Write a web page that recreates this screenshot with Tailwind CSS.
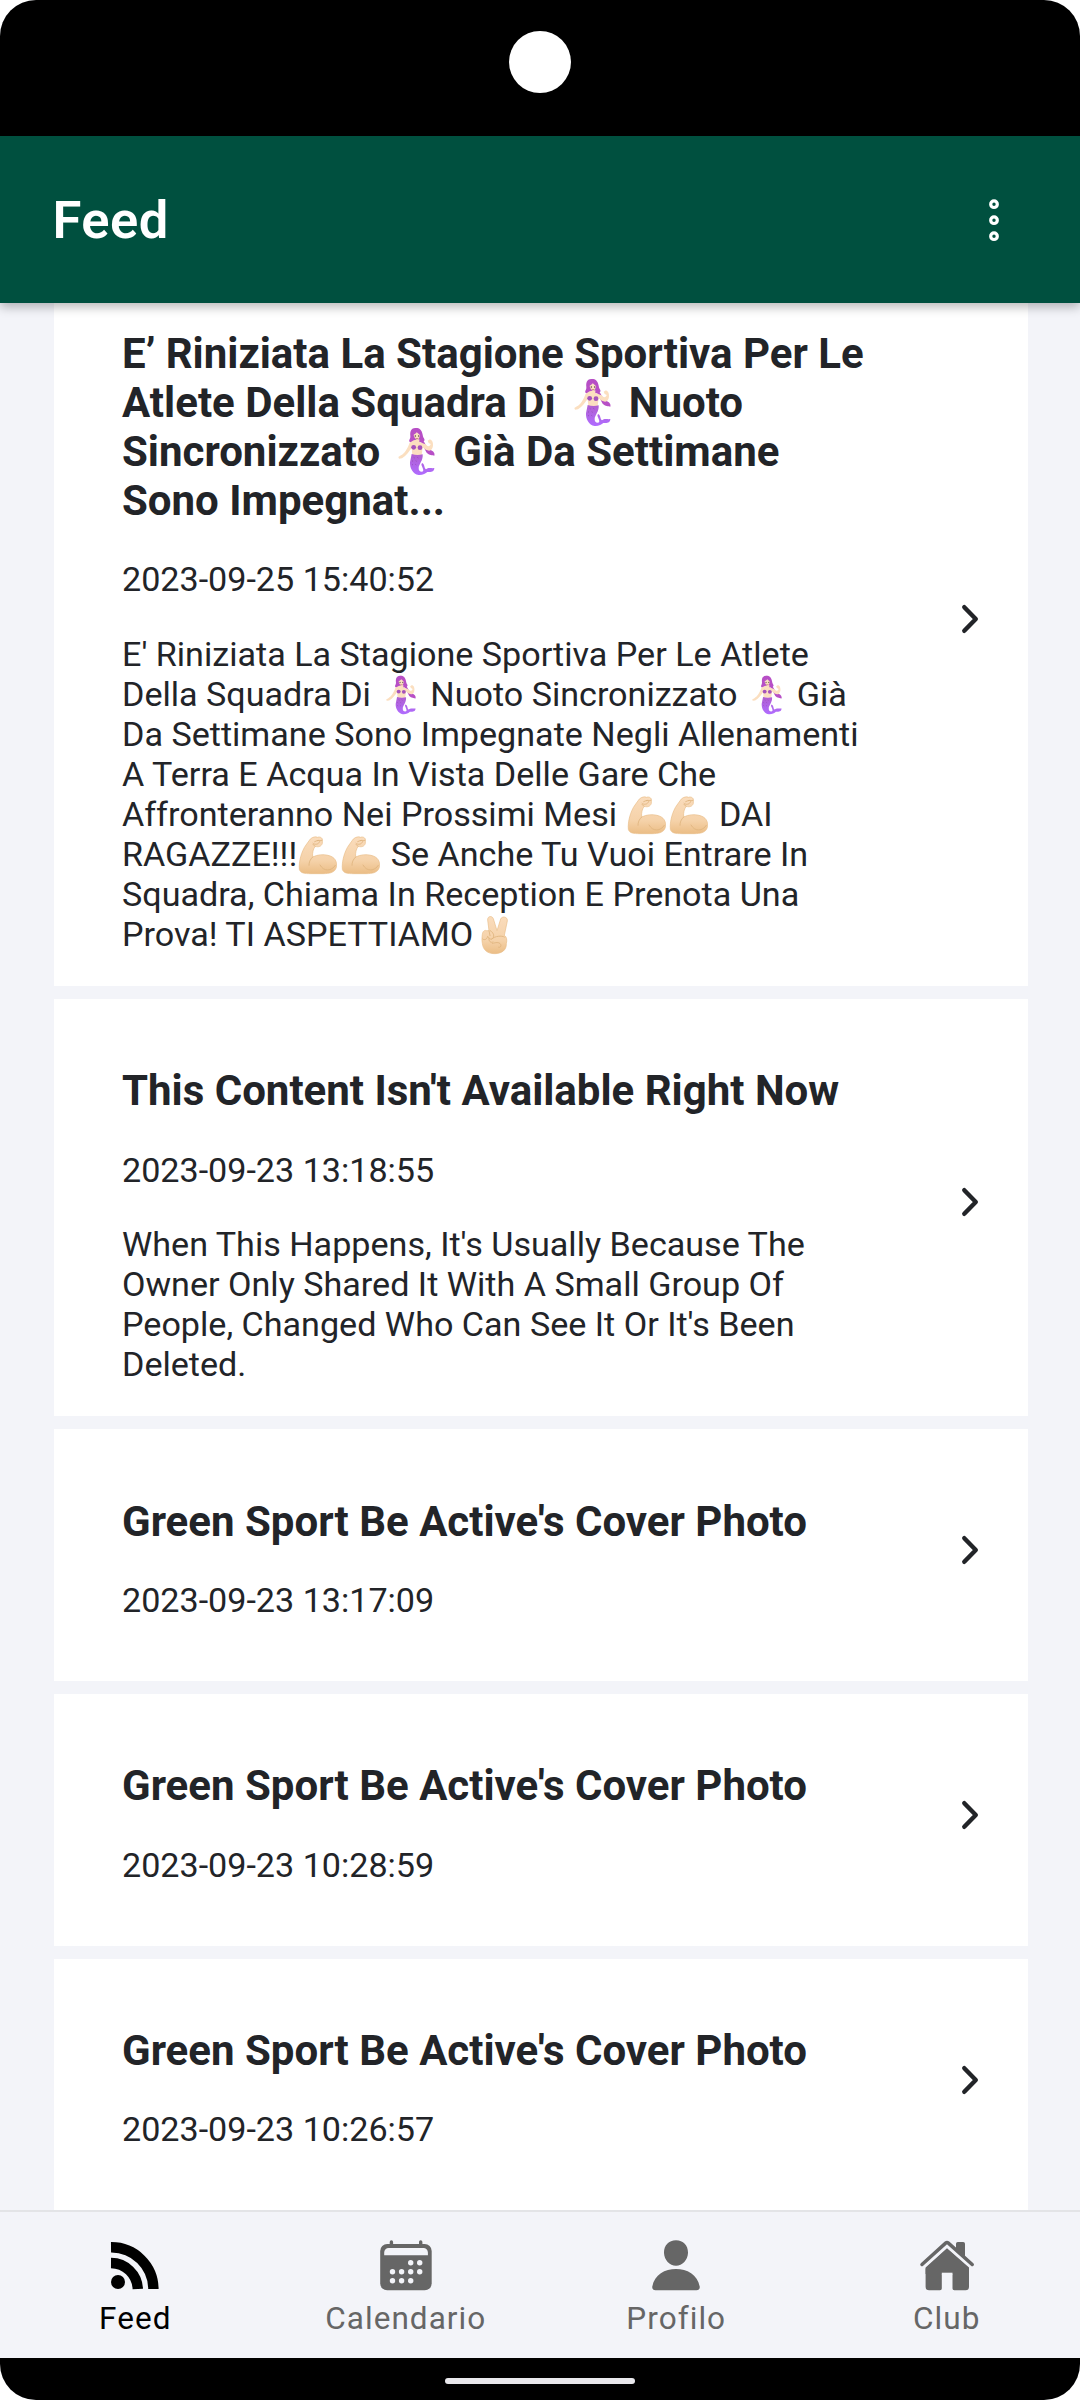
<!DOCTYPE html>
<html lang="it">
<head>
<meta charset="utf-8">
<title>Feed</title>
<script src="https://cdn.jsdelivr.net/npm/@tailwindcss/browser@4"></script>
</head>
<body class="bg-white">
<svg class="absolute size-0" aria-hidden="true">
  <defs>
    <linearGradient id="tail" x1="0" y1="0" x2="0" y2="1"><stop offset="0" stop-color="#b05fd0"/><stop offset="1" stop-color="#b06cff"/></linearGradient>
    <linearGradient id="skin" x1="0" y1="0" x2="0" y2="1"><stop offset="0" stop-color="#fadcbc"/><stop offset=".65" stop-color="#f5d2a9"/><stop offset="1" stop-color="#ebbd85"/></linearGradient>
    <symbol id="mermaid" viewBox="22 24 147 147">
      <path d="M92 27C77 28 76 40 77 51C78 61 69 65 77 70L94 73L109 70C117 77 118 90 126 101C133 109 144 108 149 110C152 100 141 93 136 93C129 90 122 75 117 67C124 61 115 59 114 47C111 31 103 26 92 27Z" fill="#b74fc6"/>
      <path d="M87 64L75 71C69 87 61 103 49 109L41 114L43 119L52 118C65 110 75 95 81 87L83 108H111L114 85C122 93 133 98 139 93C147 86 146 72 142 65L136 61L129 65L132 72L138 75C136 83 129 84 123 76L104 69V61Z" fill="#fbdfc0"/>
      <path d="M86 43Q95 36 105 43Q108 55 98 64Q88 59 86 43Z" fill="#fae0c2"/>
      <path d="M85 46Q94 42 96 33Q101 42 108 47" fill="none" stroke="#b74fc6" stroke-width="5"/>
      <circle cx="92" cy="51" r="2.2" fill="#574740"/><circle cx="102" cy="51" r="2.2" fill="#574740"/><path d="M93 58Q97 61 101 58" fill="none" stroke="#a25c51" stroke-width="2"/>
      <circle cx="87" cy="85" r="7.2" fill="#a552bb"/><circle cx="106" cy="86" r="7.2" fill="#a552bb"/>
      <path d="M81 105Q97 110 114 106C116 125 102 136 102 147C102 155 105 158 111 158C121 158 113 145 110 137L112 132C121 135 118 148 124 151C132 143 140 149 149 147C149 160 135 159 128 159C123 164 113 169 102 168C84 166 75 146 76 130Z" fill="url(#tail)"/>
      <path d="M87 115l3 2m8-2l3 2m-19 8l3 2m8-2l3 2m-14 9l3 2m7-2l3 2" fill="none" stroke="#8c47aa" stroke-width="2"/>
    </symbol>
    <symbol id="arm" viewBox="1011 42 120 120">
      <path d="M1048 54C1055 48 1064 46 1069 49C1077 46 1085 51 1084 57V67C1081 77 1072 79 1063 76C1056 85 1054 94 1055 108C1069 101 1087 99 1101 103C1122 108 1129 121 1126 139C1122 155 1105 158 1086 158H1049C1032 158 1018 157 1015 145C1013 123 1021 91 1035 72Z" fill="url(#skin)" stroke="#e8bd88" stroke-width="2"/>
      <path d="M1055 108C1047 116 1044 123 1044 133M1077 132C1088 153 1112 151 1123 133M1062 76L1056 70M1056 67C1061 72 1071 70 1074 65C1079 61 1075 56 1069 59M1083 58C1078 60 1073 57 1068 59L1061 62" fill="none" stroke="#dfb37d" stroke-width="2.5" stroke-linecap="round"/>
    </symbol>
    <symbol id="peace" viewBox="555 402 120 120">
      <path d="M597 449L593 417C592 405 606 403 610 413L621 449L632 414C636 404 654 407 652 420L643 463C650 467 652 477 649 488C650 507 635 518 614 518C591 518 579 506 577 487C575 478 576 468 577 460C578 451 584 446 590 449Z" fill="url(#skin)" stroke="#e8bd88" stroke-width="2"/>
      <path d="M597 449L600 464M578 474C584 480 592 473 593 466C600 478 607 476 611 468C613 459 606 452 601 449M605 474C615 465 635 463 643 468M607 487C617 485 627 482 632 490C635 497 630 500 626 499M597 471C595 481 603 487 609 483" fill="none" stroke="#dfb37d" stroke-width="2.5" stroke-linecap="round"/>
    </symbol>
  </defs>
</svg>

<div class="flex h-[2400px] w-[1080px] flex-col overflow-hidden rounded-[36px] bg-[#f3f4f9] font-['Roboto',sans-serif] text-[#222428]">
  <div class="flex h-[136px] shrink-0 justify-center bg-black pt-[31px]">
    <div class="size-[62px] rounded-full bg-white"></div>
  </div>

  <header class="z-10 flex h-[167px] shrink-0 items-center justify-between bg-[#00503f] pr-[74.5px] pl-[52.5px] shadow-[0_4px_10px_rgba(0,0,0,0.28)]">
    <h1 class="text-[52.5px] leading-[62px] font-semibold tracking-[0.5px] text-white">Feed</h1>
    <svg class="h-[48px] w-[24px]" viewBox="0 0 24 48" fill="none" stroke="#fff" stroke-width="3.2"><circle cx="12" cy="8.2" r="3.3"/><circle cx="12" cy="24.2" r="3.3"/><circle cx="12" cy="40.2" r="3.3"/></svg>
  </header>

  <main class="flex min-h-0 flex-1 flex-col gap-[13px] overflow-hidden pr-[52px] pl-[54px] whitespace-nowrap">
    <article class="-mt-[41px] flex shrink-0 items-center justify-between bg-white pt-[67px] pr-[48px] pb-[32px] pl-[68px]">
      <div class="flex flex-col">
        <h2 class="mb-[34px] text-[42px] leading-[49px] font-bold">E’ Riniziata La Stagione Sportiva Per Le<br>Atlete Della Squadra Di <svg class="-my-[10px] mx-[1.7px] inline-block size-[49px] align-[0px]"><use href="#mermaid"/></svg> Nuoto<br>Sincronizzato <svg class="-my-[10px] mx-[1.7px] inline-block size-[49px] align-[0px]"><use href="#mermaid"/></svg> Già Da Settimane<br>Sono Impegnat...</h2>
        <time class="mb-[35px] text-[34.125px] leading-[40px]">2023-09-25 15:40:52</time>
        <p class="text-[34.125px] leading-[40px]">E' Riniziata La Stagione Sportiva Per Le Atlete<br>Della Squadra Di <svg class="-my-[10px] mx-[1.25px] inline-block size-[40px] align-[1.5px]"><use href="#mermaid"/></svg> Nuoto Sincronizzato <svg class="-my-[10px] mx-[1.25px] inline-block size-[40px] align-[1.5px]"><use href="#mermaid"/></svg> Già<br>Da Settimane Sono Impegnate Negli Allenamenti<br>A Terra E Acqua In Vista Delle Gare Che<br>Affronteranno Nei Prossimi Mesi <svg class="-my-[10px] mx-[1.25px] inline-block size-[40px] align-[1.5px]"><use href="#arm"/></svg><svg class="-my-[10px] mx-[1.25px] inline-block size-[40px] align-[1.5px]"><use href="#arm"/></svg> DAI<br>RAGAZZE!!!<svg class="-my-[10px] mx-[1.25px] inline-block size-[40px] align-[1.5px]"><use href="#arm"/></svg><svg class="-my-[10px] mx-[1.25px] inline-block size-[40px] align-[1.5px]"><use href="#arm"/></svg> Se Anche Tu Vuoi Entrare In<br>Squadra, Chiama In Reception E Prenota Una<br>Prova! TI ASPETTIAMO<svg class="-my-[10px] mx-[1.25px] inline-block size-[40px] align-[1.5px]"><use href="#peace"/></svg></p>
      </div>
      <svg class="-mt-[46px] h-[32px] w-[24px]" viewBox="0 0 24 32" fill="none" stroke="#222428" stroke-width="4.4" stroke-linecap="round" stroke-linejoin="round"><path d="M8.300 4.200L19.800 16L8.300 27.800"/></svg>
    </article>

    <article class="flex shrink-0 items-center justify-between bg-white pt-[67px] pr-[48px] pb-[32px] pl-[68px]">
      <div class="flex flex-col">
        <h2 class="mb-[35px] text-[42px] leading-[49px] font-bold">This Content Isn't Available Right Now</h2>
        <time class="mb-[34px] text-[34.125px] leading-[40px]">2023-09-23 13:18:55</time>
        <p class="text-[34.125px] leading-[40px]">When This Happens, It's Usually Because The<br>Owner Only Shared It With A Small Group Of<br>People, Changed Who Can See It Or It's Been<br>Deleted.</p>
      </div>
      <svg class="-mt-[46px] h-[32px] w-[24px]" viewBox="0 0 24 32" fill="none" stroke="#222428" stroke-width="4.4" stroke-linecap="round" stroke-linejoin="round"><path d="M8.300 4.200L19.800 16L8.300 27.800"/></svg>
    </article>

    <article class="flex shrink-0 items-center justify-between bg-white pt-[68px] pr-[48px] pb-[61px] pl-[68px]">
      <div class="flex flex-col">
        <h2 class="mb-[34px] text-[42px] leading-[49px] font-bold">Green Sport Be Active's Cover Photo</h2>
        <time class="text-[34.125px] leading-[40px]">2023-09-23 13:17:09</time>
      </div>
      <svg class="-mt-[17px] h-[32px] w-[24px]" viewBox="0 0 24 32" fill="none" stroke="#222428" stroke-width="4.4" stroke-linecap="round" stroke-linejoin="round"><path d="M8.300 4.200L19.800 16L8.300 27.800"/></svg>
    </article>

    <article class="flex shrink-0 items-center justify-between bg-white pt-[67px] pr-[48px] pb-[61px] pl-[68px]">
      <div class="flex flex-col">
        <h2 class="mb-[35px] text-[42px] leading-[49px] font-bold">Green Sport Be Active's Cover Photo</h2>
        <time class="text-[34.125px] leading-[40px]">2023-09-23 10:28:59</time>
      </div>
      <svg class="-mt-[16px] h-[32px] w-[24px]" viewBox="0 0 24 32" fill="none" stroke="#222428" stroke-width="4.4" stroke-linecap="round" stroke-linejoin="round"><path d="M8.300 4.200L19.800 16L8.300 27.800"/></svg>
    </article>

    <article class="flex shrink-0 items-center justify-between bg-white pt-[67px] pr-[48px] pb-[62px] pl-[68px]">
      <div class="flex flex-col">
        <h2 class="mb-[34px] text-[42px] leading-[49px] font-bold">Green Sport Be Active's Cover Photo</h2>
        <time class="text-[34.125px] leading-[40px]">2023-09-23 10:26:57</time>
      </div>
      <svg class="-mt-[16px] h-[32px] w-[24px]" viewBox="0 0 24 32" fill="none" stroke="#222428" stroke-width="4.4" stroke-linecap="round" stroke-linejoin="round"><path d="M8.300 4.200L19.800 16L8.300 27.800"/></svg>
    </article>
  </main>

  <nav class="-mr-[2px] grid h-[148px] shrink-0 grid-cols-4 border-t-2 border-[#e3e4e7] bg-[#f3f4f9] pt-[26px] text-[31.5px] leading-[37px] tracking-[1.05px] text-[#666]">
    <a class="flex flex-col items-center gap-[6px] text-black">
      <svg class="size-[56px]" viewBox="0 0 56 56" fill="none" stroke="currentColor" stroke-width="10.4"><path d="M4 9.3A42 42 0 0 1 46.4 51M4 25A27 27 0 0 1 30.8 51"/><circle cx="11" cy="44" r="7" fill="currentColor" stroke="none"/></svg>
      Feed
    </a>
    <a class="flex flex-col items-center gap-[6px]">
      <svg class="size-[56px]" viewBox="0.800 0 56 56" fill="currentColor"><rect x="3" y="6" width="51.5" height="46.3" rx="7"/><path d="M14.2 8V4M43.5 8V4" stroke="currentColor" stroke-width="3.4" stroke-linecap="round"/><path d="M7 17.2V14.5A4.500 4.500 0 0 1 11.500 10H46.200A4.500 4.500 0 0 1 50.700 14.500V17.200Z" fill="#f3f4f9"/><g fill="#f3f4f9"><circle cx="33.500" cy="24.700" r="2.700"/><circle cx="42.500" cy="24.700" r="2.700"/><circle cx="15.300" cy="33.700" r="2.700"/><circle cx="24.400" cy="33.700" r="2.700"/><circle cx="33.500" cy="33.700" r="2.700"/><circle cx="42.500" cy="33.700" r="2.700"/><circle cx="15.300" cy="42.700" r="2.700"/><circle cx="24.400" cy="42.700" r="2.700"/><circle cx="33.500" cy="42.700" r="2.700"/></g></svg>
      Calendario
    </a>
    <a class="flex flex-col items-center gap-[6px]">
      <svg class="size-[56px]" viewBox="0 0 56 56" fill="currentColor"><path d="M28 2.300C35.500 2.300 40.300 8 40 15C39.700 22 34.500 27.700 28 27.700S16.300 22 16 15C15.700 8 20.500 2.300 28 2.300ZM28 31C39 31 49.500 36.500 51.700 48.500C52.100 50.700 50.700 52.300 48.500 52.300H7.500C5.300 52.300 3.900 50.700 4.300 48.500C6.500 36.500 17 31 28 31Z"/></svg>
      Profilo
    </a>
    <a class="flex flex-col items-center gap-[6px]">
      <svg class="size-[56px]" viewBox="0 0 56 56" fill="currentColor"><path d="M28 10.300L50 29.500V48.800A3.500 3.500 0 0 1 46.500 52.300H35.300A1.800 1.800 0 0 1 33.500 50.500V34.700H22.800V50.500A1.800 1.800 0 0 1 21 52.300H10.100A3.500 3.500 0 0 1 6.600 48.800V29.500ZM37 13V5.800A1.800 1.800 0 0 1 38.800 4H44.200A1.800 1.800 0 0 1 46 5.800V21Z"/><path d="M28 7.400L3 29V26L28 4.500L53.200 26V29Z" fill="#f3f4f9"/><path d="M28 10.800L50 30.500V36H6.600V30.500Z"/><path d="M22.800 36.500V34.700H33.500V36.500Z" fill="#f3f4f9"/><path d="M3 26.500L26.600 5.100Q28 3.900 29.400 5.100L53.200 26.500" fill="none" stroke="currentColor" stroke-width="3.500" stroke-linecap="round"/></svg>
      Club
    </a>
  </nav>

  <div class="flex h-[42px] shrink-0 justify-center bg-black pt-[20px]">
    <div class="h-[6px] w-[190px] rounded-full bg-[#e9e8ec]"></div>
  </div>
</div>
</body>
</html>
